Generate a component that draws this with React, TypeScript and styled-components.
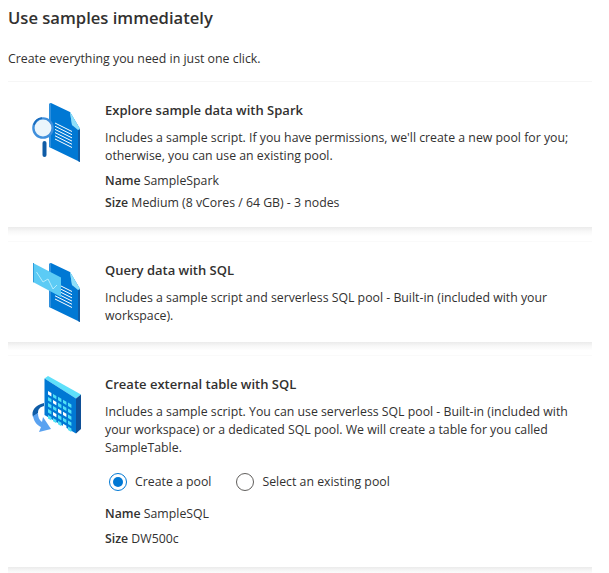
import styled, { createGlobalStyle } from "styled-components";

const GlobalStyle = createGlobalStyle`
  html, body {
    margin: 0;
    padding: 0;
    background: #fff;
    color: #323130;
    font-family: "Open Sans", "Noto Sans", sans-serif;
    font-size: 12px;
  }
`;

const Page = styled.div`
  width: 609px;
  height: 573px;
  padding: 7px 17px 0 8px;
  box-sizing: border-box;
  overflow: hidden;
`;

const Heading = styled.h1`
  margin: 0;
  font-size: 16.6px;
  line-height: 22px;
  font-weight: 600;
`;

const Intro = styled.p`
  margin: 22px 0 14px;
  line-height: 16px;
  font-size: 12.35px;
`;

const CardList = styled.div`
  display: flex;
  flex-direction: column;
  border-top: 1px solid #f6f6f6;
`;

const Card = styled.section<{ $height: number }>`
  display: flex;
  height: ${(p) => p.$height}px;
  box-sizing: border-box;
  padding: 16px 4px 0 12px;
  background: #fff;
`;

const Separator = styled.div<{ $height: number }>`
  height: ${(p) => p.$height}px;
  background: linear-gradient(#ebebeb, #f8f8f8 30%, #fff 60%, #fff 92%, #f6f6f6);
`;

const IconSlot = styled.div`
  flex: 0 0 64px;
  height: 64px;
  margin-right: 21px;
  svg {
    display: block;
  }
`;

const Body = styled.div`
  flex: 1;
  min-width: 0;
  padding-top: 4px;
  font-size: 12.3px;
  line-height: 18px;
`;

const CardTitle = styled.h2`
  margin: 0 0 10px;
  font-size: 13px;
  line-height: 17px;
  font-weight: 600;
`;

const Description = styled.p`
  margin: 0 0 7px;
`;

const Field = styled.div<{ $gap?: number }>`
  margin-top: ${(p) => p.$gap ?? 5}px;
  line-height: 16px;
  padding-top: 1px;
  b {
    font-weight: 600;
  }
`;

const RadioRow = styled.div`
  display: flex;
  gap: 25px;
  margin: 16px 0 14px 4px;
`;

const RadioOption = styled.label`
  display: flex;
  align-items: center;
  gap: 8px;
  height: 18px;
`;

const RadioMark = styled.span<{ $checked?: boolean }>`
  width: 18px;
  height: 18px;
  box-sizing: border-box;
  border-radius: 50%;
  border: 1px solid ${(p) => (p.$checked ? "#0078d4" : "#605e5c")};
  display: flex;
  align-items: center;
  justify-content: center;
  &::after {
    content: "";
    display: ${(p) => (p.$checked ? "block" : "none")};
    width: 10px;
    height: 10px;
    border-radius: 50%;
    background: #0078d4;
  }
`;

function DocShape() {
  const lines = [0, 1, 2, 3, 4, 5];
  return (
    <>
      <polygon points="31,5 50,14 60,31 60,64 58,63 29,49 29,6" fill="#0078d4" />
      <polygon points="58,32 60,31 60,64 58,63" fill="#0f5ca6" />
      <polygon points="29,6 31,5 31,49 29,49" fill="#2f8fdc" />
      <polygon points="50,14 60,31 52,27" fill="#5ec8f2" />
      <polygon points="50,14 52,27 58,32 60,31" fill="#8fe0fa" />
      {lines.map((i) => (
        <line
          key={i}
          x1="35"
          y1={25 + i * 3.2}
          x2="52"
          y2={33.5 + i * 3.2}
          stroke="#fff"
          strokeWidth="1"
        />
      ))}
    </>
  );
}

function SparkIcon() {
  return (
    <svg width="64" height="64" viewBox="0 0 64 64">
      <DocShape />
      <rect x="22.5" y="43" width="4" height="16" rx="2" fill="#0f5ca6" />
      <circle cx="23" cy="30" r="9.6" fill="#eaf5fc" stroke="#3f8fdc" strokeWidth="2.4" />
      <path d="M14 27a9.6 9.6 0 0 1 8-7" fill="none" stroke="#1a6cbc" strokeWidth="1.6" />
    </svg>
  );
}

function SqlIcon() {
  return (
    <svg width="64" height="64" viewBox="0 0 64 64">
      <DocShape />
      <polygon points="13,5 41,19.5 41,39 13,24" fill="#5ccbf5" />
      <polygon points="13,5 14,5 14,24.5 13,24" fill="#2f9ddc" />
      <polyline
        points="16.5,14 23,24 28,21 33,31 37,27"
        fill="none"
        stroke="#b5ecfc"
        strokeWidth="1"
      />
    </svg>
  );
}

function TableIcon() {
  const cells: [number, number][] = [];
  for (let col = 0; col < 5; col++) {
    for (let row = 0; row < 5; row++) {
      cells.push([col, row]);
    }
  }
  const white = ["0,0", "1,1", "2,2", "3,2", "3,4", "1,3"];
  return (
    <svg width="64" height="64" viewBox="0 0 64 64">
      <polygon points="24.5,6.5 28,4 61,22.5 56,26.5" fill="#5ee0fa" />
      <polygon points="24.5,6.5 56,26.5 56,61.5 24.5,43" fill="#0078d4" />
      <polygon points="56,26.5 61,22.5 61,57 56,61.5" fill="#0f4f96" />
      {cells.map(([col, row]) => {
        const x = 28 + col * 5;
        const y = 19 + col * 2.9 + row * 6;
        return (
          <polygon
            key={`${col},${row}`}
            points={`${x},${y} ${x + 3.4},${y + 2} ${x + 3.4},${y + 5.4} ${x},${y + 3.4}`}
            fill={white.includes(`${col},${row}`) ? "#ffffff" : "#50e0f5"}
          />
        );
      })}
      <path d="M24 31C15 33 11 39 13 45L18 41C18 37 20 35 24 34Z" fill="#0f5ca6" />
      <path d="M13 44C14 50 17 53 21 55L19 60L31 57L23 45L22 50C19 48 18 45 18 41Z" fill="#5aa2f0" />
    </svg>
  );
}

export default function App() {
  return (
    <Page>
      <GlobalStyle />
      <Heading>Use samples immediately</Heading>
      <Intro>Create everything you need in just one click.</Intro>
      <CardList>
        <Card $height={145}>
          <IconSlot>
            <SparkIcon />
          </IconSlot>
          <Body>
            <CardTitle>Explore sample data with Spark</CardTitle>
            <Description>
              Includes a sample script. If you have permissions, we'll create a new pool for you;
              otherwise, you can use an existing pool.
            </Description>
            <Field>
              <b>Name</b> SampleSpark
            </Field>
            <Field>
              <b>Size</b> Medium (8 vCores / 64 GB) - 3 nodes
            </Field>
          </Body>
        </Card>
        <Separator $height={15} />
        <Card $height={100}>
          <IconSlot>
            <SqlIcon />
          </IconSlot>
          <Body>
            <CardTitle>Query data with SQL</CardTitle>
            <Description>
              Includes a sample script and serverless SQL pool - Built-in (included with your
              workspace).
            </Description>
          </Body>
        </Card>
        <Separator $height={14} />
        <Card $height={211}>
          <IconSlot>
            <TableIcon />
          </IconSlot>
          <Body>
            <CardTitle>Create external table with SQL</CardTitle>
            <Description>
              Includes a sample script. You can use serverless SQL pool - Built-in (included with
              your workspace) or a dedicated SQL pool. We will create a table for you called
              SampleTable.
            </Description>
            <RadioRow>
              <RadioOption>
                <RadioMark $checked />
                Create a pool
              </RadioOption>
              <RadioOption>
                <RadioMark />
                Select an existing pool
              </RadioOption>
            </RadioRow>
            <Field>
              <b>Name</b> SampleSQL
            </Field>
            <Field $gap={8}>
              <b>Size</b> DW500c
            </Field>
          </Body>
        </Card>
        <Separator $height={14} />
      </CardList>
    </Page>
  );
}
